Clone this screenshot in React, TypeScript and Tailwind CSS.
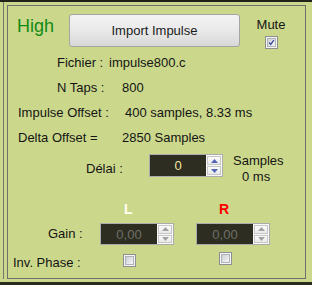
import React from "react";

const Arrow = ({ up, color }: { up: boolean; color: string }) => (
  <svg width="7" height="4" viewBox="0 0 7 4">
    {up ? <polygon points="0,4 7,4 3.5,0" fill={color} /> : <polygon points="0,0 7,0 3.5,4" fill={color} />}
  </svg>
);

const Spin = ({ value, text, arrow, h }: { value: string; text: string; arrow: string; h: string }) => (
  <div className={`flex ${h} w-[74px] border border-[#ababab] bg-[#2d2d22]`}>
    <div className="flex flex-1 items-center justify-center text-[13px] leading-[15px]" style={{ color: text }}>
      {value}
    </div>
    <div className="flex w-[16px] flex-col gap-[1px] bg-[#f8f8f8] p-[1px]">
      <div className="flex flex-1 items-center justify-center border border-[#c6c6c6] bg-gradient-to-b from-[#fbfbfb] to-[#e9e9e9]">
        <Arrow up color={arrow} />
      </div>
      <div className="flex flex-1 items-center justify-center border border-[#c6c6c6] bg-gradient-to-b from-[#fbfbfb] to-[#e9e9e9]">
        <Arrow up={false} color={arrow} />
      </div>
    </div>
  </div>
);

const Check = ({ checked }: { checked?: boolean }) => (
  <div className="flex h-[13px] w-[13px] items-center justify-center border border-[#8e8f8f] bg-[#f4f4f4]">
    <div className="flex h-[9px] w-[9px] items-center justify-center border border-[#aeb3b9] bg-gradient-to-br from-[#cbcfd5] to-[#f6f6f6]">
      {checked && (
        <svg width="9" height="9" viewBox="0 0 9 9">
          <path d="M1.5 4.5 L3.5 7 L7.5 1.5" stroke="#3c4a9a" strokeWidth="1.6" fill="none" />
        </svg>
      )}
    </div>
  </div>
);

export default function App() {
  return (
    <div
      className="flex h-[285px] w-[312px] flex-col bg-[#cbd88c] text-[#141414]"
      style={{ fontFamily: '"Liberation Sans", Arial, sans-serif' }}
    >
      <div className="h-[2px] bg-[#22221c]" />
      <div className="flex h-[280px]">
        <div className="ml-[3px] h-[277px] w-px bg-[#737373]" />
        <div className="ml-[3px] mt-[3px] flex h-[274px] w-[299px] flex-col border border-[#6f6f6f] text-[13px] leading-[15px]">
          {/* header */}
          <div className="mt-[8px] flex h-[33px] items-start">
            <div className="ml-[9px] mt-[2px] w-[52px] text-[18px] leading-[20px] text-[#138a13]">High</div>
            <button className="flex h-[33px] w-[171px] items-center justify-center rounded-[3px] border border-[#a4a4a4] bg-gradient-to-b from-[#f3f3f3] via-[#e9e9e9] to-[#d8d8d8] text-[13px] text-[#1a1a1a]">
              Import Impulse
            </button>
            <div className="ml-[17px] flex w-[28px] flex-col items-center">
              <div className="mt-[3px]">Mute</div>
              <div className="mt-[4px]">
                <Check checked />
              </div>
            </div>
          </div>
          {/* Fichier */}
          <div className="mt-[8px] flex h-[15px] pl-[49px]">
            <div className="w-[52px]">Fichier :</div>
            <div>impulse800.c</div>
          </div>
          <div className="mt-[10px] flex h-[15px] pl-[49px]">
            <div className="w-[65px]">N Taps :</div>
            <div>800</div>
          </div>
          <div className="mt-[10px] flex h-[15px] pl-[10px]">
            <div className="w-[107px]">Impulse Offset :</div>
            <div>400 samples, 8.33 ms</div>
          </div>
          <div className="mt-[10px] flex h-[15px] pl-[10px]">
            <div className="w-[104px]">Delta Offset =</div>
            <div>2850 Samples</div>
          </div>
          {/* Delai */}
          <div className="mt-[8px] flex h-[30px] items-start pl-[78px]">
            <div className="mt-[8px] w-[63px]">Délai :</div>
            <div className="mt-[1px]">
              <Spin value="0" text="#f4e7a2" arrow="#5565b5" h="h-[23px]" />
            </div>
            <div className="ml-[10px] flex flex-col leading-[16px]">
              <div>Samples</div>
              <div className="pl-[9px]">0 ms</div>
            </div>
          </div>
          {/* L R */}
          <div className="mt-[18px] flex h-[16px] pl-[116px] text-[14px] font-bold leading-[16px]">
            <div className="w-[95px] text-[#fffff2]">L</div>
            <div className="text-[#ff0000]">R</div>
          </div>
          {/* Gain */}
          <div className="mt-[6px] flex h-[22px] items-start pl-[40px]">
            <div className="mt-[3px] w-[52px]">Gain :</div>
            <Spin value="0,00" text="#6f7068" arrow="#a0a0a0" h="h-[22px]" />
            <div className="ml-[22px]">
              <Spin value="0,00" text="#6f7068" arrow="#a0a0a0" h="h-[22px]" />
            </div>
          </div>
          {/* Inv phase */}
          <div className="mt-[7px] flex h-[16px] items-start pl-[5px]">
            <div className="mt-[3px] w-[110px]">Inv. Phase :</div>
            <div className="mt-[2px]">
              <Check />
            </div>
            <div className="ml-[83px]">
              <Check />
            </div>
          </div>
        </div>
      </div>
      <div className="h-[3px] bg-[#2a2a20]" />
    </div>
  );
}
